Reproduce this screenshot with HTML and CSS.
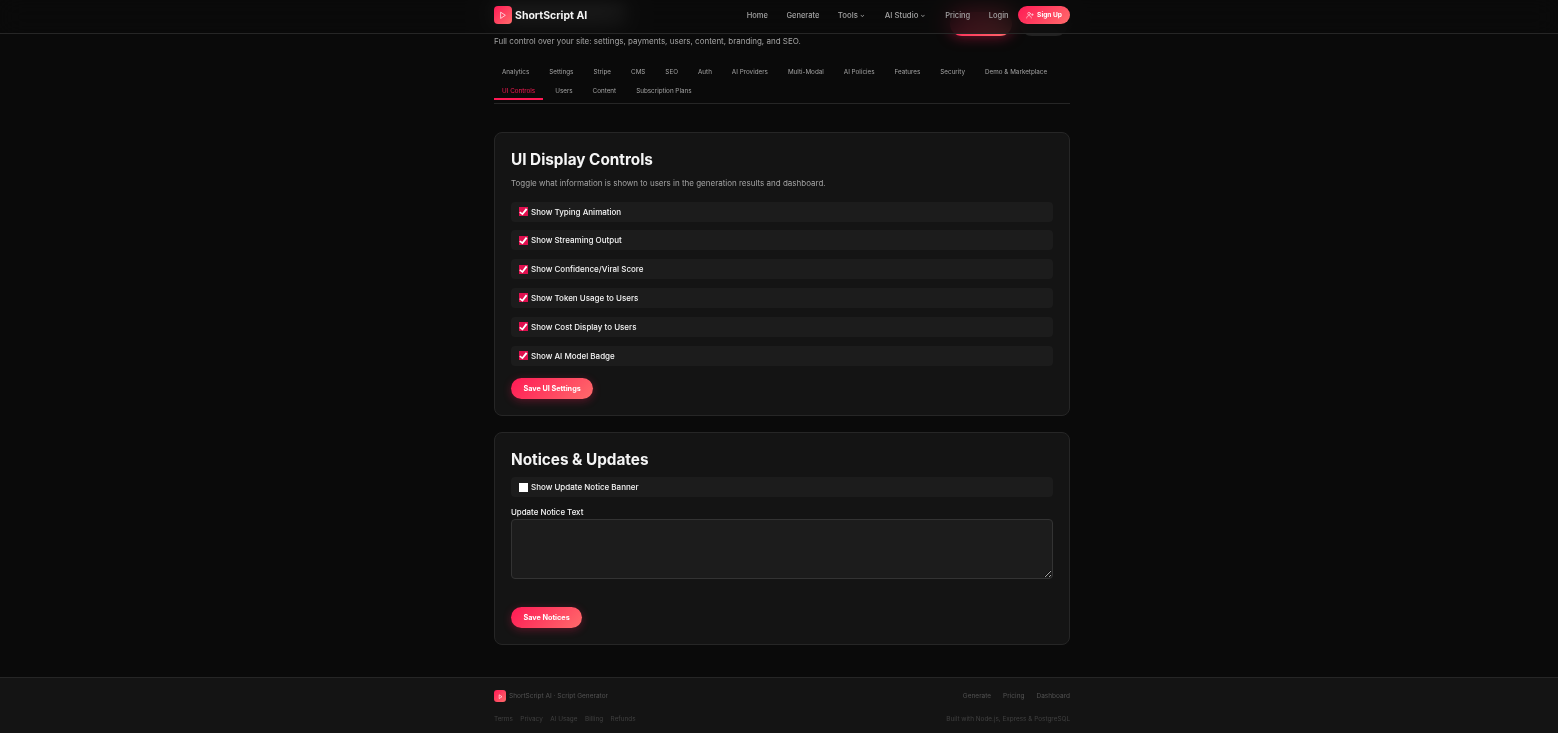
FILE: index.html
```html
<!DOCTYPE html>
<html lang="en">
<head>
    <meta charset="UTF-8">
    <meta name="viewport" content="width=device-width, initial-scale=1.0">
    <title>ShortScript AI - Admin</title>
    <link rel="stylesheet" href="styles.css">
</head>
<body>
    <header class="topbar">
        <div class="wrap topbar-inner">
            <a class="brand">
                <span class="logo">
                    <svg viewBox="0 0 24 24" width="14" height="14" fill="none" stroke="#fff" stroke-opacity="0.8" stroke-width="1.5" stroke-linejoin="round" stroke-linecap="round"><path d="M8.5 7.5l7.5 5-7.5 5z"/></svg>
                </span>
                <span class="brand-name">ShortScript AI</span>
            </a>
            <nav class="topnav">
                <a>Home</a>
                <a>Generate</a>
                <a class="nav-drop">Tools <span class="caret">⌄</span></a>
                <a class="nav-drop">AI Studio <span class="caret">⌄</span></a>
                <a>Pricing</a>
                <a>Login</a>
                <a class="signup">
                    <svg viewBox="0 0 24 24" width="8" height="8" fill="none" stroke="#fff" stroke-width="1.6" stroke-linecap="round"><circle cx="9" cy="8" r="4"/><path d="M2 21c0-4 3-7 7-7s7 3 7 7M19 8v6M16 11h6"/></svg>
                    Sign Up
                </a>
            </nav>
        </div>
    </header>

    <main class="wrap page">
        <section class="hero">
            <div>
                <div class="hero-title"></div>
                <p>Full control over your site: settings, payments, users, content, branding, and SEO.</p>
            </div>
            <div class="hero-actions">
                <a class="hero-btn hero-red"></a>
                <a class="hero-btn hero-dark"></a>
            </div>
        </section>

        <div class="tabs">
            <a>Analytics</a>
            <a>Settings</a>
            <a>Stripe</a>
            <a>CMS</a>
            <a>SEO</a>
            <a>Auth</a>
            <a>AI Providers</a>
            <a>Multi-Modal</a>
            <a>AI Policies</a>
            <a>Features</a>
            <a>Security</a>
            <a>Demo &amp; Marketplace</a>
            <a class="active">UI Controls</a>
            <a>Users</a>
            <a>Content</a>
            <a>Subscription Plans</a>
        </div>

        <section class="card card-ui">
            <h2>UI Display Controls</h2>
            <p class="hint">Toggle what information is shown to users in the generation results and dashboard.</p>
            <label class="check-row"><input type="checkbox" checked> Show Typing Animation</label>
            <label class="check-row"><input type="checkbox" checked> Show Streaming Output</label>
            <label class="check-row"><input type="checkbox" checked> Show Confidence/Viral Score</label>
            <label class="check-row"><input type="checkbox" checked> Show Token Usage to Users</label>
            <label class="check-row"><input type="checkbox" checked> Show Cost Display to Users</label>
            <label class="check-row"><input type="checkbox" checked> Show AI Model Badge</label>
            <button class="btn-save">Save UI Settings</button>
        </section>

        <section class="card card-notices">
            <h2>Notices &amp; Updates</h2>
            <label class="check-row"><input type="checkbox"> Show Update Notice Banner</label>
            <label class="field-label" for="noticeText">Update Notice Text</label>
            <textarea id="noticeText"></textarea>
            <button class="btn-save">Save Notices</button>
        </section>
    </main>

    <footer class="footer">
        <div class="wrap">
            <div class="footer-row footer-top">
                <div class="footer-brand">
                    <span class="logo logo-sm">
                        <svg viewBox="0 0 24 24" width="9" height="9" fill="none" stroke="#fff" stroke-opacity="0.8" stroke-width="2" stroke-linejoin="round"><path d="M8.5 7.5l7.5 5-7.5 5z"/></svg>
                    </span>
                    ShortScript AI · Script Generator
                </div>
                <div class="footer-links gap-lg">
                    <a>Generate</a>
                    <a>Pricing</a>
                    <a>Dashboard</a>
                </div>
            </div>
            <div class="footer-row footer-bottom">
                <div class="footer-links">
                    <a>Terms</a>
                    <a>Privacy</a>
                    <a>AI Usage</a>
                    <a>Billing</a>
                    <a>Refunds</a>
                </div>
                <span>Built with Node.js, Express &amp; PostgreSQL</span>
            </div>
        </div>
    </footer>
</body>
</html>
```

FILE: styles.css
```css
* {
    margin: 0;
    padding: 0;
    box-sizing: border-box;
}
html, body {
    height: 733px;
    overflow: hidden;
}
body {
    font-family: 'Inter', 'Liberation Sans', sans-serif;
    background: #0a0a0a;
    color: #f5f5f5;
}
.wrap {
    width: 576px;
    margin-left: 494px;
    will-change: transform;
}
.topbar {
    position: fixed;
    top: 0;
    left: 0;
    width: 100%;
    height: 34px;
    background: rgba(10, 10, 10, 0.8);
    backdrop-filter: blur(12px);
    border-bottom: 1px solid #262626;
    z-index: 10;
}
.topbar-inner {
    display: flex;
    justify-content: space-between;
    align-items: center;
    height: 30px;
}
.brand {
    display: flex;
    align-items: center;
    gap: 3px;
}
.logo {
    display: flex;
    align-items: center;
    justify-content: center;
    width: 18px;
    height: 18px;
    border-radius: 4px;
    background: linear-gradient(135deg, #ff1a55, #ff6b6b);
}
.brand-name {
    font-size: 10.5px;
    font-weight: 700;
    color: #f5f5f5;
}
.topnav {
    display: flex;
    align-items: center;
    gap: 18.5px;
    font-size: 7.5px;
    font-weight: 500;
    color: #a3a3a3;
}
.nav-drop {
    margin-right: 1.5px;
    font-size: 7.8px;
}
.caret {
    font-size: 6px;
    vertical-align: 1px;
}
.signup {
    display: flex;
    align-items: center;
    gap: 3px;
    height: 18px;
    margin-left: -9px;
    padding: 0 8px;
    border-radius: 9px;
    background: linear-gradient(135deg, #ff1a55, #ff6b6b);
    color: #fff;
    font-size: 6.6px;
    font-weight: 700;
}
.hero {
    display: flex;
    justify-content: space-between;
    align-items: flex-end;
}
.hero-title {
    width: 131px;
    height: 16px;
    margin-top: 6px;
    margin-bottom: 13px;
    background: rgba(255, 255, 255, 0.4);
    filter: blur(5px);
}
.hero p {
    font-size: 8px;
    line-height: 12px;
    color: #a3a3a3;
}
.hero-actions {
    display: flex;
    gap: 8px;
    margin-bottom: 11px;
    padding-right: 2px;
}
.hero-btn {
    display: block;
    height: 24px;
    border-radius: 12px;
}
.hero-red {
    width: 62px;
    background: linear-gradient(135deg, #ff1a55, #ff6b6b);
    box-shadow: 0 0 14px rgba(255, 26, 85, 0.5);
}
.hero-dark {
    width: 48px;
    background: #222;
}
.tabs {
    display: flex;
    flex-wrap: wrap;
    gap: 0 4px;
    margin-top: 15px;
    padding-bottom: 3px;
    border-bottom: 1px solid #262626;
}
.tabs a {
    display: block;
    height: 19px;
    padding: 1px 8px 0;
    line-height: 18px;
    font-size: 6.3px;
    font-weight: 400;
    color: #a3a3a3;
}
.tabs a.active {
    color: #ff1a55;
    border-bottom: 2px solid #ff1a55;
}
.card {
    background: #141414;
    border: 1px solid #262626;
    border-radius: 8px;
    padding: 16px;
}
.card-ui {
    height: 284px;
    margin-top: 28px;
}
.card-notices {
    height: 213px;
    margin-top: 16px;
}
.card h2 {
    font-size: 15.3px;
    line-height: 21px;
    font-weight: 700;
}
.hint {
    margin-top: 7px;
    margin-bottom: 12.6px;
    font-size: 8px;
    line-height: 12px;
    color: #a3a3a3;
}
.check-row {
    display: flex;
    align-items: center;
    gap: 3px;
    height: 20px;
    margin-bottom: 8.8px;
    padding: 0 8px;
    border-radius: 4px;
    background: #1c1c1c;
    font-size: 8px;
    font-weight: 500;
}
.check-row input {
    appearance: none;
    position: relative;
    width: 9px;
    height: 9px;
    background: #fff;
}
.check-row input:checked {
    background: #e0104f;
}
.check-row input:checked::after {
    content: "";
    position: absolute;
    inset: 0;
    background: #fff;
    clip-path: polygon(12% 50%, 36% 66%, 76% 12%, 94% 26%, 40% 92%, 4% 64%);
}
.btn-save {
    display: block;
    height: 21px;
    margin-top: 12.6px;
    padding: 0 12.4px;
    border: none;
    border-radius: 11px;
    background: linear-gradient(135deg, #ff1a55, #ff6b6b);
    box-shadow: 0 2px 8px rgba(255, 26, 85, 0.3);
    color: #fff;
    font-family: inherit;
    font-size: 7.25px;
    font-weight: 700;
}
.card-notices h2 {
    margin-bottom: 7px;
}
.card-notices .check-row {
    margin-bottom: 9px;
}
.field-label {
    display: block;
    margin-bottom: 1px;
    font-size: 7.9px;
    line-height: 12px;
    font-weight: 500;
}
textarea {
    display: block;
    width: 100%;
    height: 60px;
    background: #1c1c1c;
    border: 1px solid #333;
    border-radius: 4px;
}
.card-notices .btn-save {
    margin-top: 28px;
}
.footer {
    position: fixed;
    left: 0;
    bottom: 0;
    width: 100%;
    height: 56px;
    background: #141414;
    border-top: 1px solid #262626;
    color: #525252;
    font-size: 6.5px;
}
.footer-row {
    display: flex;
    justify-content: space-between;
    align-items: center;
}
.footer-top {
    height: 12px;
    margin-top: 12px;
}
.footer-bottom {
    margin-top: 13px;
    color: #404040;
    font-size: 6.4px;
}
.footer-brand {
    display: flex;
    align-items: center;
    gap: 3px;
}
.logo-sm {
    width: 12px;
    height: 12px;
    border-radius: 3px;
}
.footer-links {
    display: flex;
    gap: 7.5px;
}
.gap-lg {
    gap: 12px;
}
```
